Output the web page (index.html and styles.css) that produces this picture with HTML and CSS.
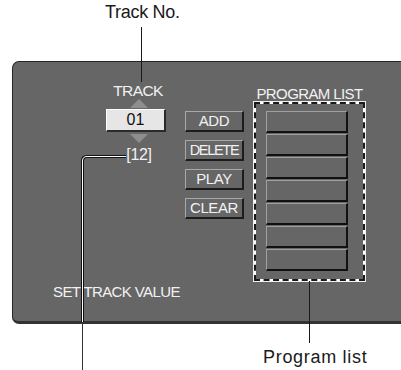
FILE: index.html
```html
<!DOCTYPE html>
<html lang="en">
<head>
  <meta charset="UTF-8">
  <title>Program Play</title>
  <link rel="stylesheet" href="styles.css">
</head>
<body>
  <div class="figure">
    <div class="note note-track">Track No.</div>

    <div class="panel">
      <div class="panel-row">
        <div class="track">
          <div class="track-label">TRACK</div>
          <div class="arrow-up"></div>
          <div class="track-value">01</div>
          <div class="arrow-down"></div>
          <div class="track-count">[12]</div>
        </div>

        <div class="buttons">
          <div class="btn">ADD</div>
          <div class="btn btn-narrow">DELETE</div>
          <div class="btn">PLAY</div>
          <div class="btn">CLEAR</div>
        </div>

        <div class="program">
          <div class="program-label">PROGRAM LIST</div>
          <div class="program-box">
            <div class="slot"></div>
            <div class="slot"></div>
            <div class="slot"></div>
            <div class="slot"></div>
            <div class="slot"></div>
            <div class="slot"></div>
            <div class="slot"></div>
          </div>
        </div>
      </div>
      <div class="set-label">SET TRACK VALUE</div>
    </div>

    <div class="note note-list">Program list</div>

    <!-- callout lines -->
    <svg class="leaders" width="401" height="370" viewBox="0 0 401 370">
      <path d="M141.5 27 V82" stroke="#1a1a1a" stroke-width="1" fill="none"/>
      <path d="M126 156.5 H87 Q82.5 156.5 82.5 161 V322" stroke="#111" stroke-width="3" fill="none"/>
      <path d="M126 156.5 H87 Q82.5 156.5 82.5 161 V322" stroke="#fff" stroke-width="1" fill="none"/>
      <path d="M82.5 322 V370" stroke="#333" stroke-width="1" fill="none"/>
      <path d="M309.5 281 V343" stroke="#1a1a1a" stroke-width="1" fill="none"/>
    </svg>
  </div>
</body>
</html>
```

FILE: styles.css
```css
body {
  margin: 0;
  background-color: #ffffff;
  font-family: 'Liberation Sans', Arial, sans-serif;
  overflow: hidden;
}
.figure {
  position: relative;
  width: 401px;
  height: 370px;
  overflow: hidden;
}
.note {
  position: absolute;
  font-size: 18px;
  line-height: 20px;
  color: #1a1a1a;
  white-space: nowrap;
}
.note-track {
  left: 105px;
  top: 2px;
  letter-spacing: -0.3px;
}
.note-list {
  left: 263px;
  top: 347px;
  letter-spacing: 0.7px;
}
.leaders {
  position: absolute;
  left: 0;
  top: 0;
  pointer-events: none;
}
.panel {
  box-sizing: border-box;
  margin: 61px 0 0 12px;
  width: 400px;
  height: 263px;
  padding-top: 19px;
  background-color: #666666;
  border: 1px solid #262626;
  border-bottom: 3px solid #333333;
  border-radius: 7px;
  display: flex;
  flex-direction: column;
  color: #f2f2f2;
}
.panel-row {
  display: flex;
  align-items: flex-start;
  height: 200px;
}
.track {
  margin-left: 93px;
  width: 60px;
  display: flex;
  flex-direction: column;
  align-items: center;
}
.track-label {
  font-size: 15.5px;
  line-height: 17px;
  letter-spacing: -0.6px;
  margin-left: 4px;
  padding-top: 1px;
}
.arrow-up, .arrow-down {
  width: 0;
  height: 0;
  margin-left: 6px;
  border-left: 9px solid transparent;
  border-right: 9px solid transparent;
}
.arrow-up {
  border-bottom: 9px solid #8e8e8e;
}
.arrow-down {
  margin-top: 2px;
  border-top: 9px solid #8e8e8e;
}
.track-value {
  box-sizing: border-box;
  width: 60px;
  height: 23px;
  margin-top: 1px;
  background-color: #e6e6e6;
  border-top: 1px solid #ffffff;
  border-left: 1px solid #ffffff;
  border-right: 2px solid #2a2a2a;
  border-bottom: 2px solid #2a2a2a;
  color: #111111;
  font-size: 16px;
  line-height: 20px;
  text-align: center;
}
.track-count {
  margin-top: 3px;
  margin-left: 6px;
  font-size: 16px;
  line-height: 17px;
  letter-spacing: -0.3px;
}
.buttons {
  margin-left: 19px;
  margin-top: 30px;
  display: flex;
  flex-direction: column;
  gap: 8px;
}
.btn {
  box-sizing: border-box;
  width: 59px;
  height: 21px;
  border-top: 1px solid #a8a8a8;
  border-left: 1px solid #a8a8a8;
  border-right: 2px solid #1c1c1c;
  border-bottom: 2px solid #1c1c1c;
  font-size: 15px;
  line-height: 18px;
  letter-spacing: -0.4px;
  text-align: center;
}
.btn-narrow {
  font-size: 14.5px;
  letter-spacing: -1.3px;
}
.program {
  margin-left: 10px;
  width: 111px;
}
.program-label {
  margin-top: 4px;
  font-size: 15px;
  line-height: 17px;
  letter-spacing: -0.6px;
  text-align: center;
}
.program-box {
  box-sizing: border-box;
  height: 179px;
  padding: 7px 15px 0 10px;
  border: 2px dashed #1a1a1a;
  background: linear-gradient(#666666, #666666) padding-box, #ffffff border-box;
  box-shadow: 0 0 0 1px #f0f0f0;
  display: flex;
  flex-direction: column;
  gap: 1px;
}
.slot {
  box-sizing: border-box;
  height: 22px;
  border-top: 1px solid #a0a0a0;
  border-left: 1px solid #a0a0a0;
  border-right: 2px solid #111111;
  border-bottom: 2px solid #111111;
}
.set-label {
  margin-left: 40px;
  margin-top: 2px;
  font-size: 15px;
  line-height: 17px;
  letter-spacing: -0.6px;
}
```
